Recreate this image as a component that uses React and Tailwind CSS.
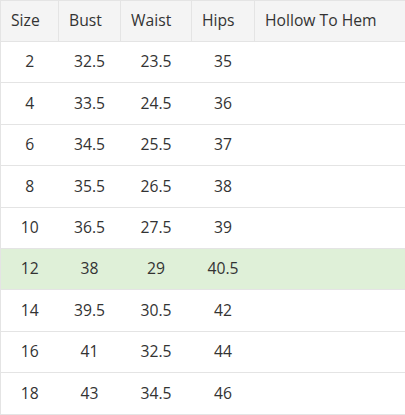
const rows = [
  ["2", "32.5", "23.5", "35"],
  ["4", "33.5", "24.5", "36"],
  ["6", "34.5", "25.5", "37"],
  ["8", "35.5", "26.5", "38"],
  ["10", "36.5", "27.5", "39"],
  ["12", "38", "29", "40.5"],
  ["14", "39.5", "30.5", "42"],
  ["16", "41", "32.5", "44"],
  ["18", "43", "34.5", "46"],
];

const headers = ["Size", "Bust", "Waist", "Hips", "Hollow To Hem"];

export default function App() {
  return (
    <div className="w-[405px] h-[415px] overflow-hidden bg-white font-['Open_Sans',sans-serif] text-[15.7px] text-[#333]">
      <table className="w-[440px] table-fixed border-collapse">
        <colgroup>
          <col className="w-[58px]" />
          <col className="w-[62px]" />
          <col className="w-[71px]" />
          <col className="w-[63px]" />
          <col />
        </colgroup>
        <thead>
          <tr className="h-[41px] bg-[#f4f4f4]">
            {headers.map((h) => (
              <th
                key={h}
                className="border border-[#e4e4e4] px-[10px] text-left font-normal"
              >
                {h}
              </th>
            ))}
          </tr>
        </thead>
        <tbody>
          {rows.map((r) => (
            <tr
              key={r[0]}
              className={`h-[41.4px] border-y border-l border-[#e4e4e4] ${r[0] === "12" ? "bg-[#dff0d8]" : ""}`}
            >
              {r.map((c, i) => (
                <td key={i} className="text-center">
                  {c}
                </td>
              ))}
              <td />
            </tr>
          ))}
        </tbody>
      </table>
    </div>
  );
}
